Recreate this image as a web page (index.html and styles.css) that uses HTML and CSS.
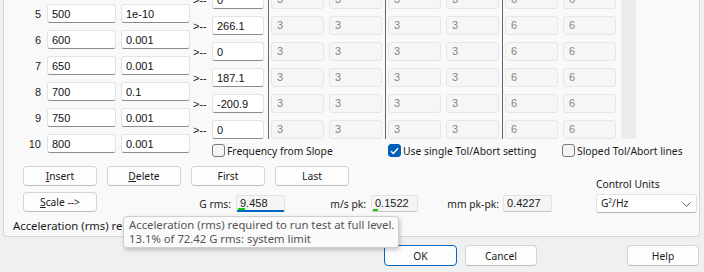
FILE: index.html
```html
<!DOCTYPE html>
<html lang="en">
<head>
    <meta charset="UTF-8">
    <title>Sine Profile</title>
    <link rel="stylesheet" href="styles.css">
</head>
<body>
    <div class="panel">
        <div class="sheet">
            <div class="points">
                <div class="point"><span class="idx">5</span><input class="edit" value="500"><input class="edit" value="1e-10"></div>
                <div class="point"><span class="idx">6</span><input class="edit" value="600"><input class="edit" value="0.001"></div>
                <div class="point"><span class="idx">7</span><input class="edit" value="650"><input class="edit" value="0.001"></div>
                <div class="point"><span class="idx">8</span><input class="edit" value="700"><input class="edit" value="0.1"></div>
                <div class="point"><span class="idx">9</span><input class="edit" value="750"><input class="edit" value="0.001"></div>
                <div class="point"><span class="idx">10</span><input class="edit" value="800"><input class="edit" value="0.001"></div>
            </div>

            <div class="right">
                <div class="levels">
                    <div class="slopes">
                        <div class="slope"><span class="arrow">&gt;--</span><input class="edit slope-edit" value="0"></div>
                        <div class="slope"><span class="arrow">&gt;--</span><input class="edit slope-edit" value="266.1"></div>
                        <div class="slope"><span class="arrow">&gt;--</span><input class="edit slope-edit" value="0"></div>
                        <div class="slope"><span class="arrow">&gt;--</span><input class="edit slope-edit" value="187.1"></div>
                        <div class="slope"><span class="arrow">&gt;--</span><input class="edit slope-edit" value="-200.9"></div>
                        <div class="slope"><span class="arrow">&gt;--</span><input class="edit slope-edit" value="0"></div>
                    </div>
                    <div class="tol-group">
                        <div class="tol-row"><span class="cell">3</span><span class="cell">3</span></div>
                        <div class="tol-row"><span class="cell">3</span><span class="cell">3</span></div>
                        <div class="tol-row"><span class="cell">3</span><span class="cell">3</span></div>
                        <div class="tol-row"><span class="cell">3</span><span class="cell">3</span></div>
                        <div class="tol-row"><span class="cell">3</span><span class="cell">3</span></div>
                        <div class="tol-row"><span class="cell">3</span><span class="cell">3</span></div>
                    </div>
                    <div class="tol-group">
                        <div class="tol-row"><span class="cell">3</span><span class="cell">3</span></div>
                        <div class="tol-row"><span class="cell">3</span><span class="cell">3</span></div>
                        <div class="tol-row"><span class="cell">3</span><span class="cell">3</span></div>
                        <div class="tol-row"><span class="cell">3</span><span class="cell">3</span></div>
                        <div class="tol-row"><span class="cell">3</span><span class="cell">3</span></div>
                        <div class="tol-row"><span class="cell">3</span><span class="cell">3</span></div>
                    </div>
                    <div class="tol-group last">
                        <div class="tol-row"><span class="cell">6</span><span class="cell">6</span></div>
                        <div class="tol-row"><span class="cell">6</span><span class="cell">6</span></div>
                        <div class="tol-row"><span class="cell">6</span><span class="cell">6</span></div>
                        <div class="tol-row"><span class="cell">6</span><span class="cell">6</span></div>
                        <div class="tol-row"><span class="cell">6</span><span class="cell">6</span></div>
                        <div class="tol-row"><span class="cell">6</span><span class="cell">6</span></div>
                    </div>
                    <div class="vscroll"></div>
                </div>

                <div class="options">
                    <label class="check opt-slope"><span class="box"></span>Frequency from Slope</label>
                    <label class="check opt-single"><span class="box checked"><svg width="9" height="8" viewBox="0 0 9 8"><path d="M1 4.2 L3.4 6.5 L8 1.3" fill="none" stroke="#fff" stroke-width="1.4"/></svg></span>Use single Tol/Abort setting</label>
                    <label class="check"><span class="box"></span>Sloped Tol/Abort lines</label>
                </div>
            </div>
        </div>

        <div class="controls">
            <div class="controls-main">
                <div class="btn-row">
                    <button class="btn"><u>I</u>nsert</button>
                    <button class="btn"><u>D</u>elete</button>
                    <button class="btn">First</button>
                    <button class="btn">Last</button>
                </div>
                <div class="readout">
                    <button class="btn"><u>S</u>cale --&gt;</button>
                    <span class="ro-label grms-label">G rms:</span>
                    <span class="ro-field grms focused">9.458<i class="meter" style="width: 7px"></i></span>
                    <span class="ro-label mps-label">m/s pk:</span>
                    <span class="ro-field mps">0.1522<i class="meter" style="width: 5px"></i></span>
                    <span class="ro-label mm-label">mm pk-pk:</span>
                    <span class="ro-field mm">0.4227</span>
                </div>
            </div>
            <div class="units">
                <span class="units-label">Control Units</span>
                <div class="select">G²/Hz
                    <svg class="chev" width="9" height="5" viewBox="0 0 9 5"><path d="M0.5 0.5 L4.5 4.3 L8.5 0.5" fill="none" stroke="#606060" stroke-width="1"/></svg>
                </div>
            </div>
        </div>

        <div class="status">Acceleration (rms) requ</div>
    </div>

    <div class="footer">
        <button class="btn default">OK</button>
        <button class="btn">Cancel</button>
        <button class="btn help">Help</button>
    </div>

    <div class="tooltip">
        Acceleration (rms) required to run test at full level.<br>
        13.1% of 72.42 G rms: system limit
    </div>
</body>
</html>
```

FILE: styles.css
```css
* {
    box-sizing: border-box;
}
body {
    margin: 0;
    width: 704px;
    height: 272px;
    overflow: hidden;
    position: relative;
    background-color: #f0f0f0;
    color: #1b1b1b;
    font-family: "Noto Sans", sans-serif;
    font-size: 10.3px;
}
.panel {
    margin: -10px 4px 0 3px;
    height: 247px;
    border: 1px solid #d6d6d6;
    border-top: none;
    border-radius: 0 0 4px 4px;
    background-color: #f9f9f9;
}
.sheet {
    display: flex;
    align-items: flex-start;
}
.points {
    width: 186px;
    padding-top: 14px;
    display: flex;
    flex-direction: column;
    gap: 7px;
}
.point {
    display: flex;
    align-items: center;
    height: 19px;
}
.idx {
    width: 37px;
    margin-right: 6px;
    text-align: right;
    font-family: "Liberation Sans", sans-serif;
    font-size: 11px;
}
.edit {
    width: 69px;
    height: 19px;
    padding: 0 4px;
    border: 1px solid #e3e3e3;
    border-bottom-color: #8d8d8d;
    border-radius: 3px;
    background-color: #fff;
    color: #111;
    font-family: "Liberation Sans", sans-serif;
    font-size: 11px;
    outline: none;
}
.edit + .edit {
    margin-left: 5px;
}
.levels {
    display: flex;
    height: 149px;
}
.slopes {
    padding-left: 3px;
    margin-right: 4px;
    display: flex;
    flex-direction: column;
    gap: 7px;
}
.slope {
    display: flex;
    align-items: center;
    height: 19px;
}
.arrow {
    width: 19px;
    font-family: "Liberation Sans", sans-serif;
    font-size: 11px;
}
.slope-edit {
    width: 52px;
}
.tol-group {
    border-left: 1px solid #666;
    padding: 0 3px 0 2px;
    display: flex;
    flex-direction: column;
    gap: 7px;
}
.tol-row {
    display: flex;
    gap: 5px;
}
.cell {
    width: 53px;
    height: 19px;
    padding: 0 5px;
    border: 1px solid #e6e6e6;
    border-radius: 3px;
    background-color: #f6f6f6;
    color: #858585;
    font-family: "Liberation Sans", sans-serif;
    font-size: 11px;
    line-height: 17px;
}
.vscroll {
    width: 15px;
    margin-left: 2px;
    background-color: #ececec;
}
.options {
    display: flex;
    margin-top: 5px;
    padding-left: 22px;
    height: 13px;
}
.check {
    display: flex;
    align-items: center;
    height: 13px;
}
.opt-slope {
    width: 176px;
}
.opt-single {
    width: 174px;
}
.box {
    width: 13px;
    height: 13px;
    margin-right: 2px;
    border: 1px solid #7a7a7a;
    border-radius: 3px;
    background-color: #f4f4f4;
    display: flex;
    align-items: center;
    justify-content: center;
}
.box.checked {
    border-color: #005fb8;
    background-color: #005fb8;
}
.controls {
    display: flex;
    margin-top: 9px;
}
.controls-main {
    padding-left: 19px;
}
.btn-row {
    display: flex;
    gap: 10px;
}
.btn {
    width: 74px;
    height: 20px;
    padding: 0;
    border: 1px solid #d3d3d3;
    border-bottom-color: #bdbdbd;
    border-radius: 4px;
    background-color: #fdfdfd;
    color: #1b1b1b;
    font-family: "Noto Sans", sans-serif;
    font-size: 10.3px;
}
.readout {
    display: flex;
    align-items: flex-end;
    margin-top: 6px;
}
.ro-label {
    text-align: right;
    line-height: 16px;
    margin-right: 5px;
}
.grms-label {
    width: 134px;
}
.mps-label {
    width: 81px;
}
.mm-label {
    width: 81px;
    margin-right: 4px;
}
.ro-field {
    position: relative;
    height: 17px;
    padding: 0 3px;
    border: 1px solid #e3e3e3;
    border-bottom-color: #c4c4c4;
    border-radius: 2px;
    background-color: #f5f5f5;
    font-family: "Liberation Sans", sans-serif;
    font-size: 11px;
    line-height: 15px;
}
.grms {
    width: 49px;
}
.mps {
    width: 47px;
}
.mm {
    width: 49px;
}
.focused {
    border-bottom: 2px solid #0067c0;
}
.meter {
    position: absolute;
    left: 1px;
    bottom: 0;
    height: 2px;
    background-color: #16c60c;
}
.units {
    margin-left: auto;
    margin-right: 2px;
    margin-top: 10px;
    display: flex;
    flex-direction: column;
}
.units-label {
    line-height: 16px;
}
.select {
    position: relative;
    width: 101px;
    height: 19px;
    margin-top: 2px;
    padding-left: 4px;
    border: 1px solid #e2e2e2;
    border-bottom-color: #b5b5b5;
    border-radius: 3px;
    background-color: #fff;
    line-height: 17px;
}
.chev {
    position: absolute;
    right: 5px;
    top: 7px;
}
.status {
    width: 128px;
    margin-top: 5px;
    padding-left: 9px;
    white-space: nowrap;
    overflow: hidden;
    font-size: 11.3px;
    line-height: 16px;
}
.footer {
    display: flex;
    gap: 8px;
    margin-top: 8px;
    padding-left: 384px;
    padding-right: 5px;
}
.footer .btn {
    width: 73px;
    height: 21px;
}
.footer .btn + .btn {
    width: 72px;
}
.footer .help {
    width: 71px;
    margin-left: auto;
}
.btn.default {
    border-color: #0067c0;
}
.tooltip {
    position: absolute;
    left: 123px;
    top: 216px;
    width: 276px;
    height: 32px;
    padding: 1px 0 0 5px;
    border: 1px solid #cfcfcf;
    border-radius: 4px;
    background-color: #fafafa;
    box-shadow: 1px 2px 4px rgba(0, 0, 0, 0.22);
    color: #555;
    font-size: 11.3px;
    line-height: 14px;
}
```
